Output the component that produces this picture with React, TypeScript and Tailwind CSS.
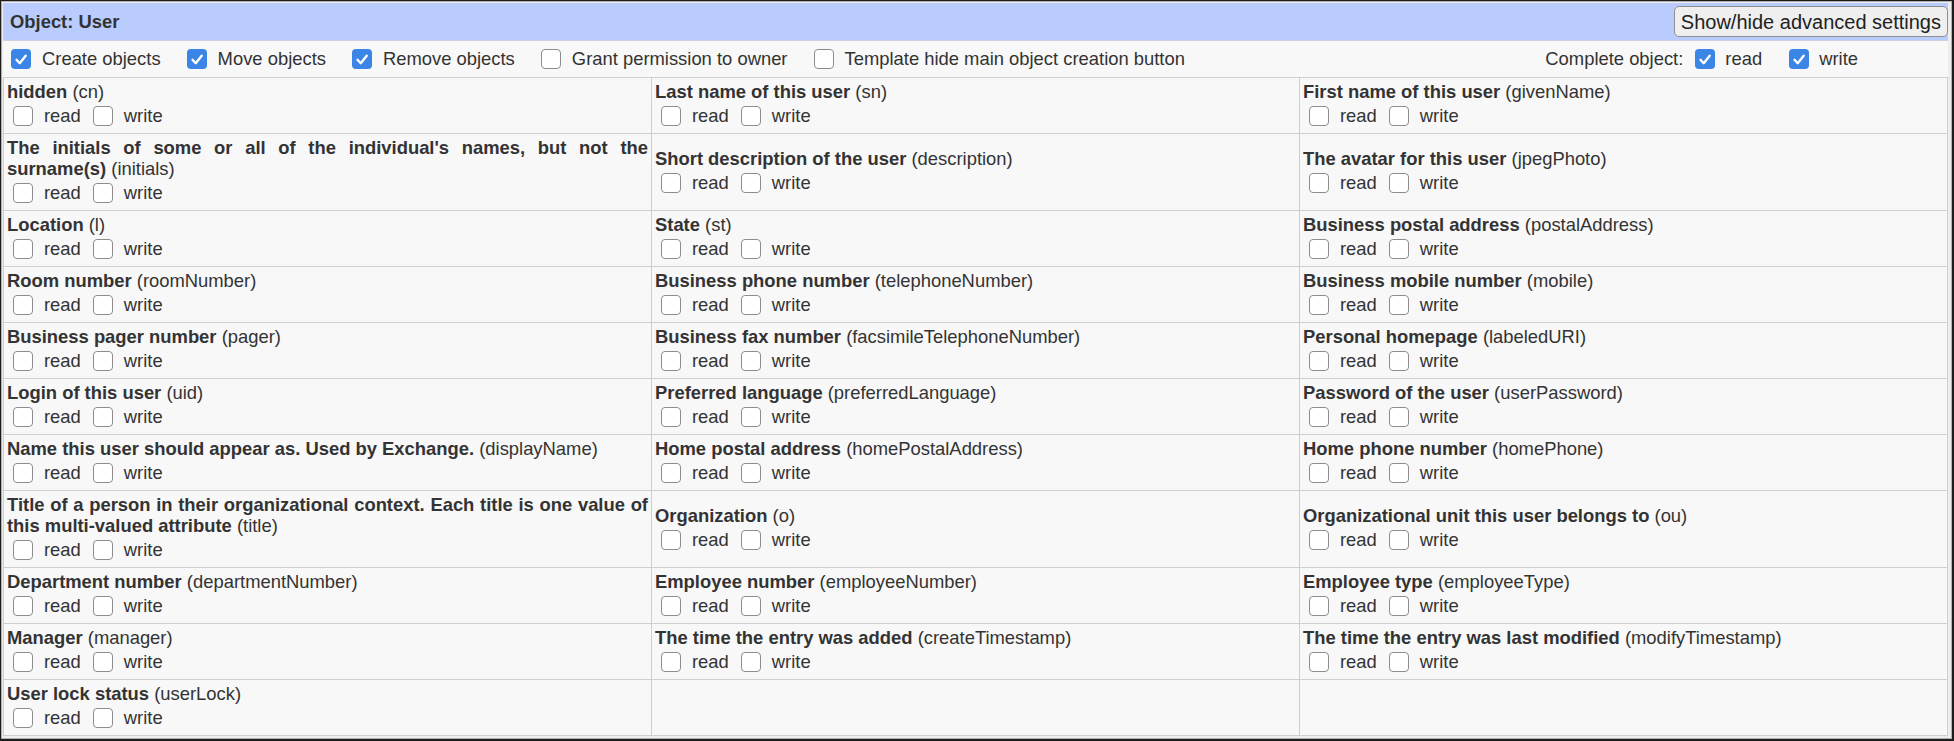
import React from "react";

type Attr = { name: string; key: string };

const ROWS: (Attr | null)[][] = [
	[
		{ name: "hidden", key: "cn" },
		{ name: "Last name of this user", key: "sn" },
		{ name: "First name of this user", key: "givenName" },
	],
	[
		{ name: "The initials of some or all of the individual's names, but not the surname(s)", key: "initials" },
		{ name: "Short description of the user", key: "description" },
		{ name: "The avatar for this user", key: "jpegPhoto" },
	],
	[
		{ name: "Location", key: "l" },
		{ name: "State", key: "st" },
		{ name: "Business postal address", key: "postalAddress" },
	],
	[
		{ name: "Room number", key: "roomNumber" },
		{ name: "Business phone number", key: "telephoneNumber" },
		{ name: "Business mobile number", key: "mobile" },
	],
	[
		{ name: "Business pager number", key: "pager" },
		{ name: "Business fax number", key: "facsimileTelephoneNumber" },
		{ name: "Personal homepage", key: "labeledURI" },
	],
	[
		{ name: "Login of this user", key: "uid" },
		{ name: "Preferred language", key: "preferredLanguage" },
		{ name: "Password of the user", key: "userPassword" },
	],
	[
		{ name: "Name this user should appear as. Used by Exchange.", key: "displayName" },
		{ name: "Home postal address", key: "homePostalAddress" },
		{ name: "Home phone number", key: "homePhone" },
	],
	[
		{
			name: "Title of a person in their organizational context. Each title is one value of this multi-valued attribute",
			key: "title",
		},
		{ name: "Organization", key: "o" },
		{ name: "Organizational unit this user belongs to", key: "ou" },
	],
	[
		{ name: "Department number", key: "departmentNumber" },
		{ name: "Employee number", key: "employeeNumber" },
		{ name: "Employee type", key: "employeeType" },
	],
	[
		{ name: "Manager", key: "manager" },
		{ name: "The time the entry was added", key: "createTimestamp" },
		{ name: "The time the entry was last modified", key: "modifyTimestamp" },
	],
	[{ name: "User lock status", key: "userLock" }, null, null],
];

const TOP_OPTIONS = [
	{ label: "Create objects", checked: true },
	{ label: "Move objects", checked: true },
	{ label: "Remove objects", checked: true },
	{ label: "Grant permission to owner", checked: false },
	{ label: "Template hide main object creation button", checked: false },
];

function Box({ checked = false }: { checked?: boolean }) {
	if (checked)
		return (
			<span className="inline-flex w-[20px] h-[20px] shrink-0 items-center justify-center rounded-[4px] bg-[#3a85e6]">
				<svg viewBox="0 0 20 20" className="w-[20px] h-[20px]">
					<path
						d="M5.5 10.8l3.2 3.4 6-7.4"
						fill="none"
						stroke="white"
						strokeWidth="2.4"
						strokeLinecap="round"
						strokeLinejoin="round"
					/>
				</svg>
			</span>
		);
	return <span className="inline-block w-[20px] h-[20px] shrink-0 rounded-[4px] border border-[#8d8d8d] bg-white" />;
}

function ReadWrite() {
	return (
		<div className="flex items-center h-[28px] pl-[6px]">
			<Box />
			<span className="ml-[11px]">read</span>
			<span className="ml-[12px] flex">
				<Box />
			</span>
			<span className="ml-[11px]">write</span>
		</div>
	);
}

export default function App() {
	return (
		<div className="w-[1954px] h-[741px] overflow-hidden border-t border-l border-r-2 border-b-2 border-[#1c1c1c] bg-[#ededed] font-['Liberation_Sans',Arial,sans-serif] text-[18.4px] text-[#333]">
			<div className="h-full border border-[#b0b0b0] pt-[1px] pl-[1px] pr-[3px] pb-[2px]">
				{/* Header */}
				<div className="flex items-center justify-between h-[38px] pl-[7px] bg-[#b9ccfd] border-b border-[#cdd3de]">
					<span className="font-bold">Object: User</span>
					<button className="h-[31px] px-[6px] rounded-[5px] border border-[#8f8f8f] bg-[#efefef] text-[20px] text-[#222] leading-none">
						Show/hide advanced settings
					</button>
				</div>

				{/* Object permissions */}
				<div className="flex items-center h-[36px] pl-[8px] bg-[#f8f8f8]">
					{TOP_OPTIONS.map((o) => (
						<label key={o.label} className="flex items-center mr-[26px]">
							<Box checked={o.checked} />
							<span className="ml-[11px]">{o.label}</span>
						</label>
					))}
					<div className="ml-auto mr-[90px] flex items-center">
						<span>Complete object:</span>
						<span className="ml-[12px] flex">
							<Box checked />
						</span>
						<span className="ml-[10px]">read</span>
						<span className="ml-[27px] flex">
							<Box checked />
						</span>
						<span className="ml-[10px]">write</span>
					</div>
				</div>

				{/* Attributes */}
				<table className="w-full table-fixed border-collapse bg-[#f8f8f8]">
					<tbody>
						{ROWS.map((row, i) => (
							<tr key={i}>
								{row.map((attr, j) => (
									<td key={j} className="border border-[#cfcfcf] px-[3px] py-[3px] align-middle">
										{attr && (
											<>
												<div className="leading-[21px] text-justify">
													<b>{attr.name}</b> ({attr.key})
												</div>
												<ReadWrite />
											</>
										)}
									</td>
								))}
							</tr>
						))}
					</tbody>
				</table>
			</div>
		</div>
	);
}
